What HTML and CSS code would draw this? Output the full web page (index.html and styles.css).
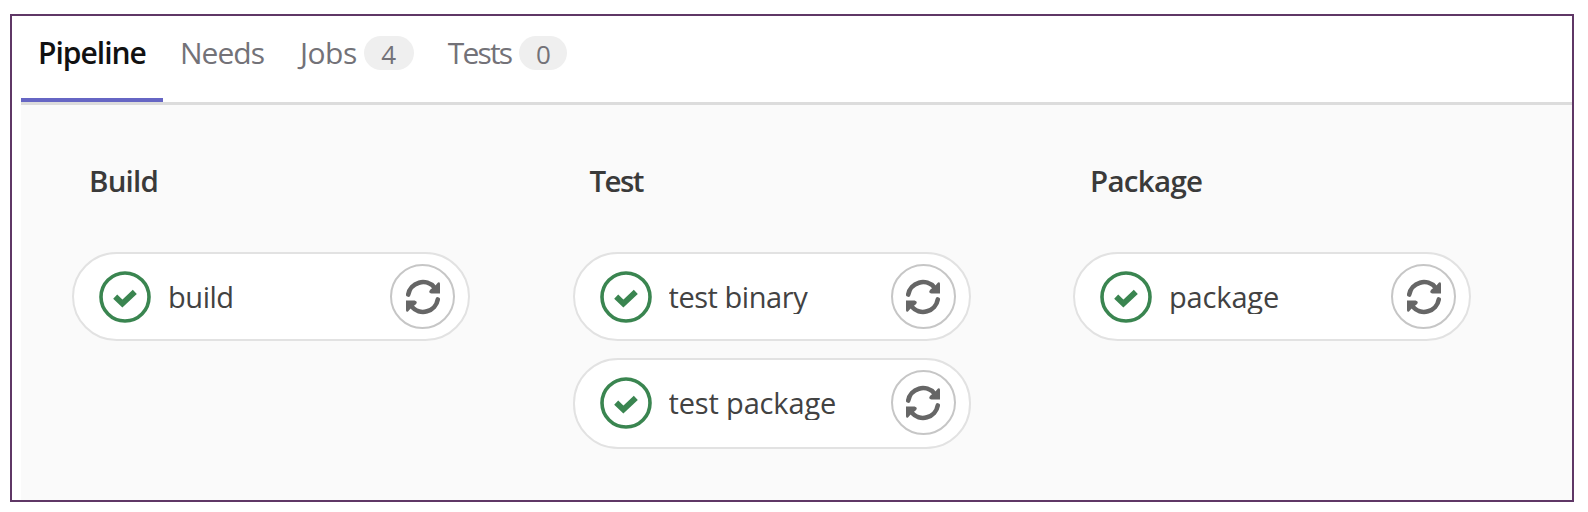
FILE: index.html
```html
<!DOCTYPE html>
<html lang="en">
<head>
<meta charset="utf-8">
<title>Pipeline</title>
<link rel="stylesheet" href="styles.css">
</head>
<body>
<svg class="defs" width="0" height="0" aria-hidden="true">
  <symbol id="passed" viewBox="0 0 52 52">
    <circle cx="26" cy="26" r="24" fill="none" stroke="#3a8550" stroke-width="3.6"/>
    <path d="M16.2 25.6 L23.4 32.6 L35.8 20.8" fill="none" stroke="#3a8550" stroke-width="5.8"/>
  </symbol>
  <symbol id="retry" viewBox="0 0 36 36">
    <g fill="none" stroke="#666" stroke-width="4.6" stroke-linecap="round">
      <path d="M3.2 15.6 A15 15 0 0 1 29.4 8.4"/>
      <path d="M32.8 20.4 A15 15 0 0 1 6.6 27.6"/>
    </g>
    <path d="M25.4 10.4 L30 7 L33 3.6 Q35 2.6 35 5 V14.4 H26.4 Q22.6 13.4 25.4 10.4 Z" fill="#666"/>
    <path d="M10.6 25.6 L6 29 L3 32.4 Q1 33.4 1 31 V21.6 H9.6 Q13.4 22.6 10.6 25.6 Z" fill="#666"/>
  </symbol>
</svg>
<main class="frame">
  <nav class="tabs">
    <a class="tab tab-active">Pipeline</a>
    <a class="tab">Needs</a>
    <a class="tab tab-jobs">Jobs<span class="badge badge-wide">4</span></a>
    <a class="tab tab-tests">Tests<span class="badge">0</span></a>
  </nav>
  <section class="graph">
    <div class="stage">
      <h2 class="title">Build</h2>
      <div class="job"><svg class="status"><use href="#passed"/></svg><span class="name">build</span><button class="action"><svg class="retry"><use href="#retry"/></svg></button></div>
    </div>
    <div class="stage">
      <h2 class="title title-test">Test</h2>
      <div class="job"><svg class="status"><use href="#passed"/></svg><span class="name">test binary</span><button class="action"><svg class="retry"><use href="#retry"/></svg></button></div>
      <div class="job job-tall"><svg class="status"><use href="#passed"/></svg><span class="name name-long">test package</span><button class="action"><svg class="retry"><use href="#retry"/></svg></button></div>
    </div>
    <div class="stage">
      <h2 class="title title-package">Package</h2>
      <div class="job"><svg class="status"><use href="#passed"/></svg><span class="name name-long">package</span><button class="action"><svg class="retry"><use href="#retry"/></svg></button></div>
    </div>
  </section>
</main>
</body>
</html>
```
FILE: styles.css
```css
* { box-sizing: border-box; }
body {
  margin: 0;
  padding: 14px 14px 0 10px;
  height: 512px;
  overflow: hidden;
  background: #fff;
  font-family: "Open Sans", "Noto Sans", sans-serif;
}
.defs { display: block; }
.frame {
  height: 488px;
  border: 2px solid #5f3766;
  padding-left: 9px;
  display: flex;
  flex-direction: column;
}
.tabs {
  display: flex;
  height: 89px;
  flex: none;
  border-bottom: 3px solid #dcdcdc;
}
.tab {
  display: flex;
  height: 86px;
  line-height: 42px;
  padding: 16px 0 0 17px;
  font-size: 30px;
  color: #737278;
  letter-spacing: -1px;
  white-space: nowrap;
}
.tab-active {
  width: 142px;
  border-bottom: 4px solid #6666c4;
  color: #111;
  font-weight: 600;
}
.tab-jobs { padding-left: 36px; letter-spacing: -0.5px; }
.tab-tests { padding-left: 34px; letter-spacing: -1.8px; }
.badge {
  width: 48px;
  height: 34px;
  margin: 4px 0 0 8px;
  border-radius: 17px;
  background: #efefef;
  font-size: 26px;
  line-height: 36px;
  letter-spacing: 0;
  text-align: center;
}
.badge-wide { width: 50px; margin-left: 7px; }
.graph {
  flex: 1;
  display: flex;
  gap: 102.5px;
  padding: 57px 0 0 51px;
  background: #fafafa;
}
.stage { width: 398px; }
.title {
  margin: -1px 0 51px;
  padding-left: 17px;
  height: 40px;
  font-size: 29.5px;
  line-height: 40px;
  font-weight: 600;
  letter-spacing: -0.8px;
  color: #3a3a3a;
}
.title-test { letter-spacing: -1.6px; }
.title-package { letter-spacing: -0.7px; }
.job {
  display: flex;
  align-items: center;
  height: 89px;
  margin-bottom: 17px;
  padding: 0 13px 0 25px;
  border: 2px solid #e2e2e2;
  border-radius: 45px;
  background: #fff;
}
.job-tall { height: 91px; padding-bottom: 2px; }
.status { width: 52px; height: 52px; flex: none; }
.name {
  flex: 1;
  height: 34px;
  margin-left: 17px;
  overflow: hidden;
  font-size: 29px;
  line-height: 33px;
  letter-spacing: -0.45px;
  color: #424242;
  white-space: nowrap;
}
.name-long { letter-spacing: -0.15px; }
.action {
  display: flex;
  align-items: center;
  justify-content: center;
  width: 65px;
  height: 65px;
  padding: 0;
  border: 2px solid #c6c6c6;
  border-radius: 50%;
  background: #fff;
}
.retry { width: 36px; height: 36px; }
```
